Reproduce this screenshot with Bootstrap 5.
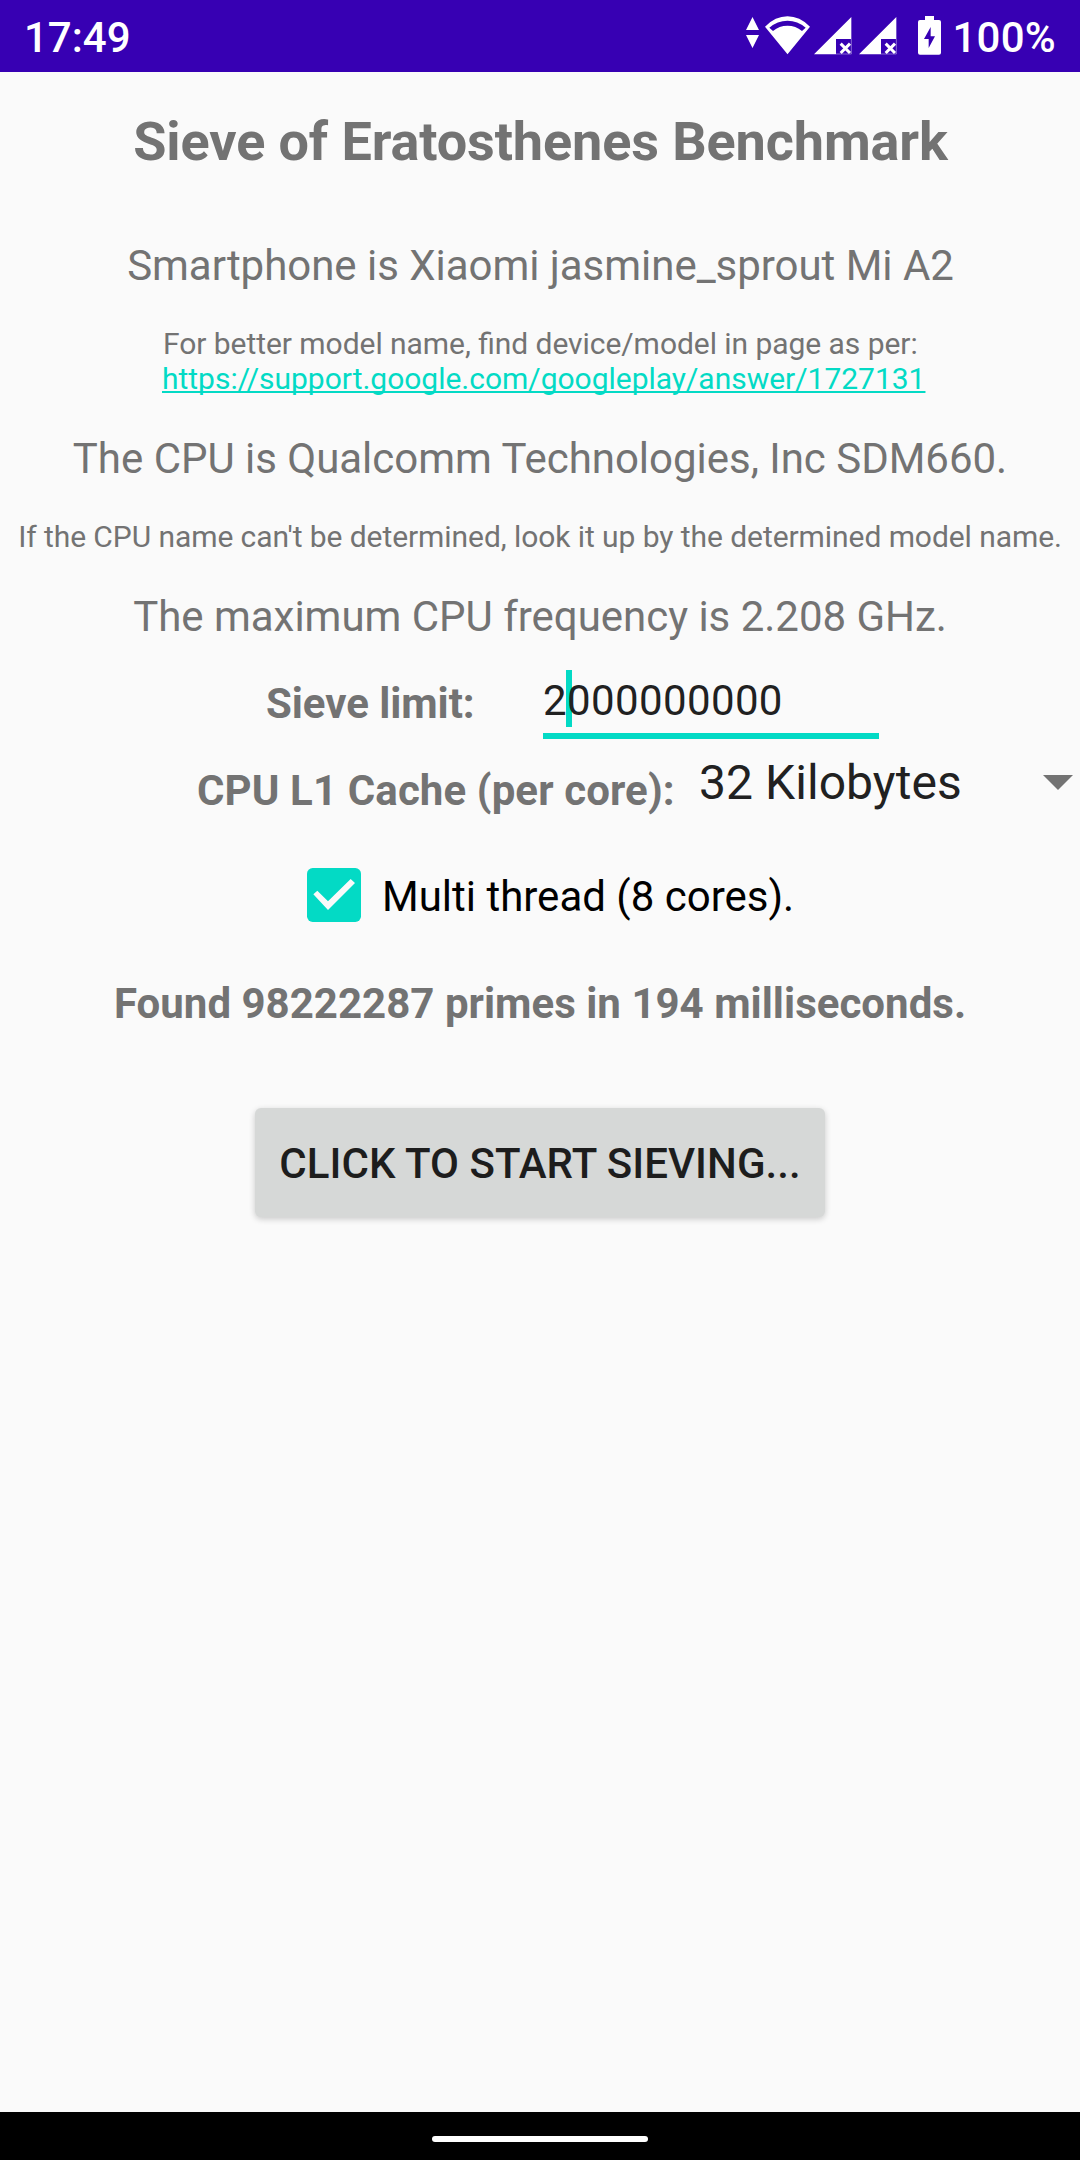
<!DOCTYPE html>
<html lang="en">
<head>
<meta charset="utf-8">
<meta name="viewport" content="width=device-width, initial-scale=1">
<title>Sieve of Eratosthenes Benchmark</title>
<link href="https://cdn.jsdelivr.net/npm/bootstrap@5.3.0/dist/css/bootstrap.min.css" rel="stylesheet">
<style>
  body { font-family: Roboto, "Liberation Sans", sans-serif; font-size: 42px; line-height: 50px; color: #737373; background: #fafafa; height: 2160px; overflow: hidden; }
  svg { display: block; flex: none; }
  .status-bar { height: 72px; background: #3700b3; font-weight: 500; padding: 0 24px; }
  .status-icons { padding-top: 16px; margin-right: -1px; }
  .status-text { padding-top: 13px; }
  .battery-level { letter-spacing: .25px; }
  .app-title { font-size: 54px; line-height: 64px; font-weight: 700; letter-spacing: -.11px; margin: 38px 0 0; padding-left: 1px; }
  .device { margin: 67px 0 0; padding-left: 1px; letter-spacing: -.03px; }
  .hint { font-size: 30px; line-height: 35px; margin: 35px 0 0; white-space: nowrap; }
  .hint-model { padding-left: 162px; }
  .hint-model span { letter-spacing: -.05px; font-feature-settings: "liga" 1; margin-left: 1px; }
  .hint-cpu { letter-spacing: -.07px; }
  .hint a { color: #03dac5; text-decoration-thickness: 2px; text-underline-offset: 2px; text-decoration-skip-ink: none; letter-spacing: -.02px; }
  .cpu { margin: 38px 0 0; letter-spacing: -.02px; }
  .limit-row { margin-top: 28px; padding-left: 266px; height: 69px; }
  .limit-label { width: 277px; padding-top: 9px; letter-spacing: -.06px; }
  .limit-field { width: 336px; height: 69px; border-bottom: 6px solid #03dac5; padding-top: 6px; color: #212121; letter-spacing: .38px; }
  .caret { top: 0; left: 23px; width: 6px; height: 57px; background: #03dac5; }
  .limit-text { z-index: 1; }
  .cache-row { margin-top: 16px; padding: 0 7px 0 197px; }
  .cache-label { width: 502px; padding-top: 11px; letter-spacing: .11px; }
  .cache-value { font-size: 48px; line-height: 56px; color: #212121; letter-spacing: .06px; }
  .cache-arrow { margin-top: 20px; }
  .threads { margin-top: 52px; padding: 0 0 0 307px; color: #000; height: 54px; }
  .threads span { margin: 4px 0 0 21px; }
  .found { margin: 57px 0 0; letter-spacing: .02px; }
  .btn-sieve { --bs-btn-color: #1d1d1d; --bs-btn-bg: #d6d8d7; --bs-btn-border-color: transparent; --bs-btn-hover-bg: #cccecd;
    font-size: 42px; line-height: 50px; font-weight: 500; width: 570px; height: 109px; border: 0; border-radius: 6px; padding: 3px 0 0;
    margin-top: 79px; white-space: nowrap; letter-spacing: .04px; box-shadow: 0 2px 6px rgba(0,0,0,.2); }
  .nav-strip { height: 48px; background: #000; padding-top: 24px; }
  .nav-pill { width: 216px; height: 6px; border-radius: 3px; background: #fff; }
</style>
</head>
<body class="d-flex flex-column">
<header class="status-bar d-flex justify-content-between align-items-start text-white">
  <span class="status-text">17:49</span>
  <div class="d-flex align-items-start">
    <div class="status-icons d-flex">
      <svg width="19" height="40" viewBox="0 0 57 120" fill="#fff"><path d="M0 42 19.500 3 39 42ZM0 57H39L19.500 96Z"/></svg>
      <svg width="49" height="40" viewBox="0 0 147 120" fill="#fff" fill-rule="evenodd"><path d="M0 32Q31 1 67.500 1T135 32L67.500 115ZM13 35 24 45Q43 29 67.500 29T111 45L122 35Q98 14 67.500 14T13 35Z"/></svg>
      <svg width="45" height="40" viewBox="0 0 135 120"><path fill="#fff" d="M0 115 112 3V69H66V115Z"/><path fill="none" stroke="#fff" stroke-width="2" stroke-opacity=".6" d="M66 114H112V69"/><path fill="none" stroke="#fff" stroke-width="9" d="m80 83 28 28m0-28-28 28"/></svg>
      <svg width="59" height="40" viewBox="0 0 177 120"><path fill="#fff" d="M0 115 112 3V69H66V115Z"/><path fill="none" stroke="#fff" stroke-width="2" stroke-opacity=".6" d="M66 114H112V69"/><path fill="none" stroke="#fff" stroke-width="9" d="m80 83 28 28m0-28-28 28"/></svg>
      <svg width="35" height="40" viewBox="0 0 105 120" fill="#fff" fill-rule="evenodd"><path d="M21 0H48V12H63Q69 12 69 18V110Q69 116 63 116H6Q0 116 0 110V18Q0 12 6 12H21ZM38 33 18 69H32V96L51 61H38Z"/></svg>
    </div>
    <span class="status-text battery-level">100%</span>
  </div>
</header>

<main class="flex-grow-1">
  <h1 class="app-title text-center">Sieve of Eratosthenes Benchmark</h1>
  <p class="device text-center">Smartphone is Xiaomi jasmine_sprout Mi A2</p>
  <p class="hint hint-model"><span>For better model name, find device/model in page as per:</span><br><a href="https://support.google.com/googleplay/answer/1727131">https://support.google.com/googleplay/answer/1727131</a></p>
  <p class="cpu text-center">The CPU is Qualcomm Technologies, Inc SDM660.</p>
  <p class="hint hint-cpu text-center">If the CPU name can't be determined, look it up by the determined model name.</p>
  <p class="cpu text-center">The maximum CPU frequency is 2.208 GHz.</p>

  <div class="limit-row d-flex align-items-start">
    <div class="limit-label fw-bold">Sieve limit:</div>
    <div class="limit-field position-relative"><span class="caret position-absolute"></span><span class="limit-text position-relative">2000000000</span></div>
  </div>

  <div class="cache-row d-flex align-items-start">
    <div class="cache-label fw-bold">CPU L1 Cache (per core):</div>
    <div class="cache-value flex-grow-1">32 Kilobytes</div>
    <svg class="cache-arrow" width="30" height="15" viewBox="0 0 30 15" fill="#737373"><path d="M0 0H30L15 15Z"/></svg>
  </div>

  <div class="threads d-flex align-items-start" role="checkbox" aria-checked="true">
    <svg width="54" height="54" viewBox="0 0 162 162"><rect width="162" height="162" rx="17" fill="#03dac5"/><path fill="#fafafa" d="M19 79 31 68 63 100 131 33 144 45 63 126Z"/></svg>
    <span>Multi thread (8 cores).</span>
  </div>

  <p class="found text-center fw-bold">Found 98222287 primes in 194 milliseconds.</p>
  <div class="d-flex justify-content-center"><button type="button" class="btn btn-sieve text-uppercase">Click to start sieving...</button></div>
</main>

<footer class="nav-strip d-flex justify-content-center align-items-start"><div class="nav-pill"></div></footer>
<script src="https://cdn.jsdelivr.net/npm/bootstrap@5.3.0/dist/js/bootstrap.bundle.min.js"></script>
</body>
</html>
